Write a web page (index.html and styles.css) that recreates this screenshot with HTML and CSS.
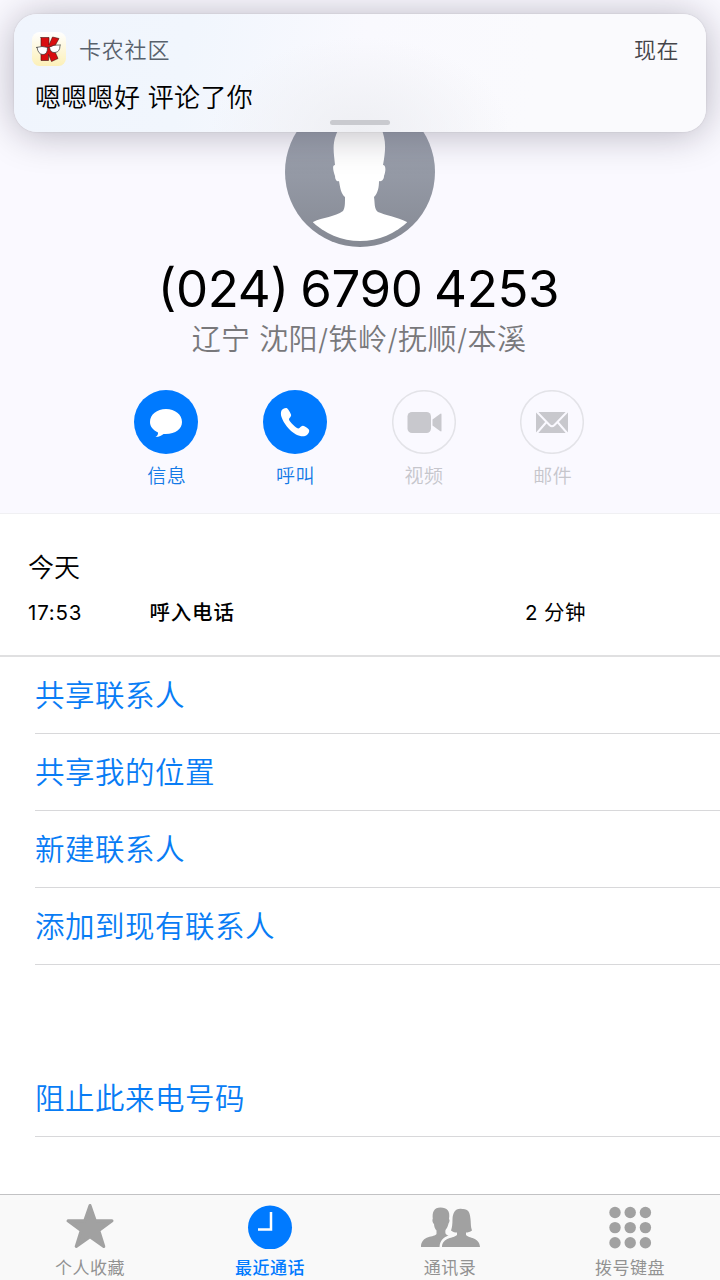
FILE: index.html
```html
<!DOCTYPE html>
<html lang="zh-CN">
<head>
<meta charset="utf-8">
<title>最近通话</title>
<link rel="stylesheet" href="styles.css">
</head>
<body>
<div class="phone">
  <header class="contact">
    <svg class="avatar" viewBox="0 0 150 150">
      <defs>
        <linearGradient id="disc" x1="0" y1="0" x2="0" y2="1">
          <stop offset="0" stop-color="#a5abb9"/><stop offset="1" stop-color="#858993"/>
        </linearGradient>
        <clipPath id="inner"><circle cx="75" cy="75" r="69"/></clipPath>
      </defs>
      <circle cx="75" cy="75" r="75" fill="url(#disc)"/>
      <path clip-path="url(#inner)" fill="#fff" d="M75 19C59 19 54 31 51 38C47 48 49 57 50 68C47 68 48 73 50 79C50 83 52 85 54 84C55 90 56 97 60 100C60 107 60 111 58 114C50 120 38 120 28 125V150H122V125C112 120 100 118 93 115C89 112 90 106 89 100C93 96 94 90 94 84C97 85 99 82 99 79C101 74 101 68 98 68C100 57 101 48 99 40C97 29 91 19 75 19Z"/>
    </svg>
    <h1 class="number"><span class="paren">(</span>024<span class="paren">)</span> 6790 4253</h1>
    <p class="region">辽宁 沈阳/铁岭/抚顺/本溪</p>
    <div class="actions">
      <div class="action">
        <svg viewBox="0 0 64 64"><circle cx="32" cy="32" r="32" fill="#007aff"/><path fill="#fff" d="M32 19C23 19 16 24.500 16 32C16 36.500 19 40 24 42.500C24.300 44.500 23 46 21.500 47C25 47 28 45.500 29.500 44C41 44.800 48 39 48 32C48 24.500 41 19 32 19Z"/></svg>
        <span>信息</span>
      </div>
      <div class="action">
        <svg viewBox="0 0 64 64"><circle cx="32" cy="32" r="32" fill="#007aff"/><path fill="#fff" d="M18.500 20.500C19.500 19 21.500 17.800 23.500 18C25 18.500 27.300 22.500 28 24.500C28.700 26.500 26 28 26 29.500C26.200 31.500 33.500 38.500 35.500 38.500C37 38.500 38 35.500 40 35.800C41.500 36.200 45 38.300 46 39.800C46.800 41.500 45.500 43.800 44 45C41.500 47 37 46.500 33 44.500C26 40.500 20.500 33 18.500 27C17.800 25 17.600 22.500 18.500 20.500Z"/></svg>
        <span>呼叫</span>
      </div>
      <div class="action off">
        <svg viewBox="0 0 64 64"><circle cx="32" cy="32" r="31.300" fill="none" stroke="#e3e3e8" stroke-width="1.500"/><rect x="15.500" y="22" width="23.500" height="21" rx="4.500" fill="#c8c8cd"/><path fill="#c8c8cd" d="M40.500 29.500L48 24Q49.500 23 49.500 24.500V40.500Q49.500 42 48 41L40.500 35.500Z"/></svg>
        <span>视频</span>
      </div>
      <div class="action off">
        <svg viewBox="0 0 64 64"><circle cx="32" cy="32" r="31.300" fill="none" stroke="#e3e3e8" stroke-width="1.500"/><path fill="#c8c8cd" d="M16 22H48V43H16Z"/><path fill="none" stroke="#faf9ff" stroke-width="2" d="M16.500 21.500L29.500 35Q32 37.500 34.500 35L47.500 21.500M16.500 43.500L26.500 32M47.500 43.500L37.500 32"/></svg>
        <span>邮件</span>
      </div>
    </div>
  </header>

  <section class="log">
    <h2 class="day">今天</h2>
    <div class="call"><span class="time">17:53</span><span class="kind">呼入电话</span><span class="length">2 分钟</span></div>
  </section>

  <ul class="options">
    <li>共享联系人</li>
    <li>共享我的位置</li>
    <li>新建联系人</li>
    <li>添加到现有联系人</li>
  </ul>
  <ul class="options block">
    <li>阻止此来电号码</li>
  </ul>

  <nav class="tabs">
    <div class="tab">
      <svg viewBox="0 0 60 48"><path fill="#a1a1a1" stroke="#a1a1a1" stroke-width="3" stroke-linejoin="round" d="M30 4.500L35.300 19.800H52L38.800 29.500L43.800 45.500L30 35.800L16.200 45.500L21.200 29.500L8 19.800H24.700Z"/></svg>
      <span>个人收藏</span>
    </div>
    <div class="tab active">
      <svg viewBox="0 0 60 48"><circle cx="30" cy="26.500" r="22" fill="#007aff"/><path fill="none" stroke="#fff" stroke-width="2.500" d="M31 11V28.600H18"/></svg>
      <span>最近通话</span>
    </div>
    <div class="tab">
      <svg viewBox="0 0 60 48"><path fill="#a1a1a1" d="M20.500 6.500C14 6.500 12 11 12.800 18C12 18 12.500 22 14 23C14.200 26 15 28 16.500 29.500V33C15 36.500 1 34 1 46H19.500C20 39 24 36 28.500 34.500C25.500 34 25 32 25.500 29C27 27 28 25 28.500 22.500C29.500 21 30 19 29 18C30.500 10 27 6.500 20.500 6.500Z"/><path fill="#a1a1a1" d="M42 8C35 7 33 12 32.500 18C32.500 23 32 27 31 29.500C33 31.200 35 31.500 37 31.500V34C34 37.500 22.500 36 22 46H60C59.500 36 48.500 37.500 46 34V31.500C48 31.500 50 31 52 29.500C50.500 26 51 22 50.500 18C50 11 48 7.500 42 8Z"/></svg>
      <span>通讯录</span>
    </div>
    <div class="tab">
      <svg viewBox="0 0 60 48"><g fill="#a1a1a1"><circle cx="15" cy="11.500" r="5.700"/><circle cx="30.200" cy="11.500" r="5.700"/><circle cx="45.400" cy="11.500" r="5.700"/><circle cx="15" cy="26.600" r="5.700"/><circle cx="30.200" cy="26.600" r="5.700"/><circle cx="45.400" cy="26.600" r="5.700"/><circle cx="15" cy="41.800" r="5.700"/><circle cx="30.200" cy="41.800" r="5.700"/><circle cx="45.400" cy="41.800" r="5.700"/></g></svg>
      <span>拨号键盘</span>
    </div>
  </nav>

  <aside class="banner">
    <div class="banner-head">
      <svg class="app" viewBox="0 0 34 34">
        <defs><linearGradient id="cream" x1="0" y1="0" x2="0" y2="1"><stop offset="0" stop-color="#fff"/><stop offset="1" stop-color="#fcf0b8"/></linearGradient></defs>
        <rect width="34" height="34" rx="7.500" fill="url(#cream)"/>
        <path fill="#d80d0f" stroke="#3c1512" stroke-width=".6" d="M8.500 5.500H17V13L20.500 5L27 6.500L21.500 16.500L26 26.500L19.500 29.500L16.500 22.500V28.500H9V5.500Z"/>
        <path fill="#fff" d="M5 15Q10 14 15.500 15.500Q15.500 22.500 11 22.500Q6 22.500 5 15ZM17.500 15.500Q22 12.800 28 13.500Q28 20 23 20.500Q18.500 21 17.500 15.500Z"/>
        <path fill="none" stroke="#333" stroke-width=".7" d="M5 15Q6 22.500 11 22.500Q15.500 22.500 15.500 15.500M17.500 15.500Q18.500 21 23 20.500Q28 20 28 13.500M4 15.500Q10 13.500 16 15.500Q22 12 29 13"/>
      </svg>
      <span class="app-name">卡农社区</span>
      <span class="when">现在</span>
    </div>
    <p class="message">嗯嗯嗯好 评论了你</p>
    <div class="grabber"></div>
  </aside>
</div>
</body>
</html>
```
FILE: styles.css
```css
* { box-sizing: border-box; margin: 0; padding: 0; }
body { width: 720px; background: #fff; font-family: Inter, "Noto Sans CJK SC", sans-serif; color: #000; }
.phone { position: relative; width: 720px; height: 1280px; overflow: hidden; display: flex; flex-direction: column; }
svg { display: block; }

.contact { height: 514px; padding-top: 97px; background: #faf9ff; border-bottom: 1px solid #f0f0f3; display: flex; flex-direction: column; align-items: center; }
.avatar { width: 150px; height: 150px; }
.number { margin-top: 11px; padding-right: 3px; height: 62px; line-height: 62px; font-size: 51px; font-weight: 400; letter-spacing: -0.35px; word-spacing: -2.500px; white-space: nowrap; }
.paren { display: inline-block; transform: translateY(-2px); }
.region { margin: 2px 2px 0 0; height: 36px; line-height: 36px; font-size: 29px; font-weight: 350; letter-spacing: .45px; color: #78787b; white-space: nowrap; }
.actions { margin: 32px 1.500px 0 0; display: flex; gap: 64.700px; }
.action { width: 64px; display: flex; flex-direction: column; align-items: center; color: #1479e6; font-size: 19px; line-height: 28px; letter-spacing: .5px; font-weight: 350; }
.action svg { width: 64px; height: 64px; margin-bottom: 9px; }
.action span { padding-left: 1px; }
.off { color: #c6c6cc; }

.log { height: 143px; padding: 35px 28px 0; border-bottom: 2px solid #e0e0e1; }
.day { font-size: 26px; font-weight: 350; line-height: 38px; }
.call { margin-top: 11px; display: grid; grid-template-columns: 121.500px 375.500px 1fr; font-size: 20.500px; line-height: 30px; letter-spacing: .4px; }
.time { letter-spacing: .8px; }
.kind { font-weight: 500; letter-spacing: .8px; }

.options { list-style: none; padding-left: 35px; }
.options li { height: 77px; border-bottom: 1.500px solid #d8d8da; line-height: 77px; font-size: 29.500px; letter-spacing: .5px; font-weight: 350; color: #087cf5; }
.block { margin-top: 95px; }

.tabs { margin-top: auto; height: 86px; border-top: 1px solid #c2c2c4; background: #f9f9f9; display: grid; grid-template-columns: repeat(4, 1fr); }
.tab { padding-top: 6px; display: flex; flex-direction: column; align-items: center; font-size: 17px; line-height: 24px; letter-spacing: .5px; color: #929292; }
.tab svg { width: 60px; height: 48px; margin-bottom: 7px; }
.active { color: #007aff; font-weight: 500; }

.banner { position: absolute; left: 14px; top: 14px; width: 692px; height: 118px; border-radius: 23px; padding: 18px 27px 0 18px; background: radial-gradient(ellipse 150px 95px at 346px 118px, #eeeff3 0%, #eeeff300 100%), linear-gradient(100deg, #f0f5fd 0%, #f1f6fd 25%, #f9f9fe 50%, #fafafd 75%); box-shadow: 0 0 2px rgba(0,0,0,.12), 0 2px 38px rgba(20,15,35,.29); }
.banner-head { height: 34px; display: flex; align-items: center; }
.app { width: 34px; height: 34px; }
.app-name, .when { margin-top: -2px; font-size: 22px; font-weight: 350; }
.app-name { margin-left: 13px; letter-spacing: .8px; color: #58616c; }
.when { margin-left: auto; letter-spacing: .5px; color: #444448; }
.message { margin: 13px 0 0 3px; font-size: 26px; line-height: 38px; letter-spacing: .3px; font-weight: 350; }
.grabber { position: absolute; left: 316px; top: 106px; width: 60px; height: 5px; border-radius: 3px; background: #c9cacf; }
```
